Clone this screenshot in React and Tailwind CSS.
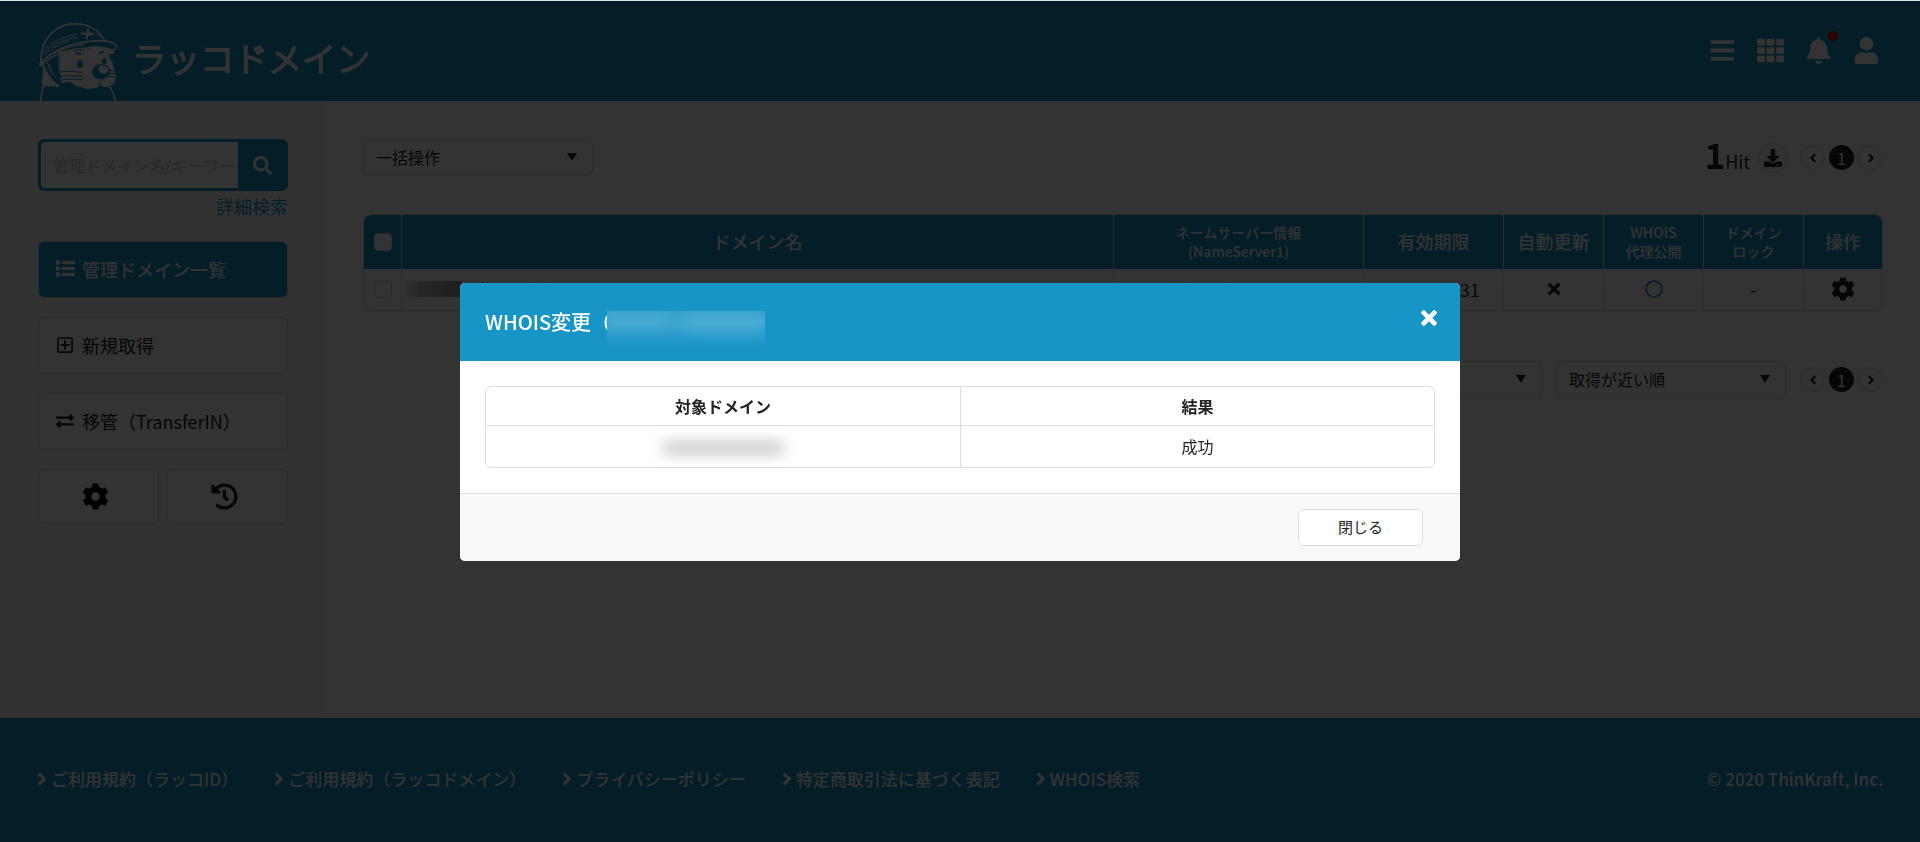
import React from 'react';
import {
  FaBars,
  FaTh,
  FaBell,
  FaUser,
  FaSearch,
  FaList,
  FaRegPlusSquare,
  FaExchangeAlt,
  FaCog,
  FaHistory,
  FaDownload,
  FaAngleLeft,
  FaAngleRight,
  FaTimes,
  FaRegCircle,
} from 'react-icons/fa';

const footerLinks = [
  'ご利用規約（ラッコID）',
  'ご利用規約（ラッコドメイン）',
  'プライバシーポリシー',
  '特定商取引法に基づく表記',
  'WHOIS検索',
];

const columns = [
  { header: 'ドメイン名', width: '' },
  { header: 'ネームサーバー情報\n(NameServer1)', width: 'w-[250px]', small: true },
  { header: '有効期限', width: 'w-[140px]' },
  { header: '自動更新', width: 'w-[100px]' },
  { header: 'WHOIS\n代理公開', width: 'w-[100px]', small: true },
  { header: 'ドメイン\nロック', width: 'w-[100px]', small: true },
  { header: '操作', width: 'w-[79px]' },
];

const Otter = () => (
  <svg viewBox="15 12 234 237" className="w-[78px] h-[79px]" fill="none" strokeLinecap="round" strokeLinejoin="round" aria-hidden="true">
    {/* back of the head and fur */}
    <path d="M27 142 L42 133 L58 168 L84 207 L72 204 L70 209 L62 204 L56 209 L52 203 L44 208 L42 202 L34 206 L30 200 L24 206 Z" fill="#fff" />
    {/* face */}
    <path d="M78 99 C100 94 112 99 128 98 C150 96 168 92 180 88 C196 83 210 90 222 92 L238 96 L241 106 L228 109 L224 114 C234 128 238 142 242 156 C247 172 247 186 240 196 C230 208 208 210 199 202 C190 214 164 214 148 211 C128 208 116 202 108 192 L78 191 Z" fill="#fff" />
    <path d="M110 193 C118 201 128 207 150 211 M198 190 C199 196 196 202 192 205" stroke="#1795c7" strokeWidth="3" />
    {/* whiskers */}
    <path d="M76 162 C98 158 120 160 144 163 M76 174 H146 M78 187 C98 182 122 184 146 185" stroke="#1795c7" strokeWidth="3" />
    <path d="M76 168 H140 M78 180 H140 M84 194 C98 190 112 190 128 190" stroke="#fff" strokeWidth="3" />
    <path d="M228 158 L244 155 M229 167 L246 167 M228 175 L244 179" stroke="#1795c7" strokeWidth="3" />
    {/* eyes, brows, nose */}
    <ellipse cx="138" cy="138" rx="9" ry="11" fill="#1795c7" />
    <ellipse cx="211" cy="130" rx="7" ry="9" fill="#1795c7" />
    <path d="M124 106 L141 108 M195 106 L210 100" stroke="#1795c7" strokeWidth="6" strokeLinecap="butt" />
    <ellipse cx="201" cy="161" rx="27" ry="23" fill="#1795c7" />
    <ellipse cx="208" cy="155" rx="15" ry="12" fill="#fff" transform="rotate(20 208 155)" />
    {/* chin strap */}
    <path d="M67 104 C60 130 66 160 78 176 M35 140 C48 172 66 196 94 206" stroke="#1795c7" strokeWidth="9" />
    <path d="M76 100 C74 130 74 150 80 170" stroke="#fff" strokeWidth="3" />
    {/* helmet */}
    <path d="M21 140 C17 66 62 17 124 17 C168 18 198 40 212 70" stroke="#fff" strokeWidth="5" />
    <path d="M18 138 C46 104 108 70 198 68 C232 68 249 78 248 88 C244 98 230 96 216 91 C196 84 176 86 160 90 C110 92 60 104 20 143 Z" stroke="#fff" strokeWidth="5" />
    <path d="M33 90 C60 70 92 56 128 49 M34 99 C62 78 94 64 130 57 M30 110 C56 90 80 78 104 70 M26 128 C60 98 112 82 150 80" stroke="#fff" strokeWidth="3" />
    <path d="M144 47 L176 48 M163 34 L158 61" stroke="#fff" strokeWidth="7" />
    <path d="M190 52 L198 54" stroke="#fff" strokeWidth="3" />
    {/* shoulders */}
    <path d="M28 204 C25 218 22 230 20 247 M227 206 C236 220 241 232 244 247" stroke="#fff" strokeWidth="5" />
  </svg>
);

const Select = ({ label, option }) => (
  <div className="relative w-[230px]">
    <select aria-label={label} className="appearance-none w-full h-[37px] pl-3 pr-10 pb-0.5 rounded-md border border-[#ddd] bg-white text-base">
      <option>{option}</option>
    </select>
    <svg viewBox="0 0 10 8" className="pointer-events-none absolute right-4 top-[14px] w-[10px] h-2" aria-hidden="true">
      <path d="M0 0H10L5 8Z" fill="#222" />
    </svg>
  </div>
);

const Pager = () => (
  <nav className="flex gap-1" aria-label="ページ">
    <button aria-label="前へ" className="size-[25px] rounded-full border border-[#ddd] flex items-center justify-center">
      <FaAngleLeft size={14} />
    </button>
    <button className="size-[25px] rounded-full bg-[#222] text-white text-base flex items-center justify-center">1</button>
    <button aria-label="次へ" className="size-[25px] rounded-full border border-[#ddd] flex items-center justify-center">
      <FaAngleRight size={14} />
    </button>
  </nav>
);

const Header = () => (
  <header className="h-[100px] shrink-0 pl-[39px] pr-10 bg-[#1795c7] text-white flex items-center justify-between">
    <a href="#" className="flex items-center gap-[15px] self-end h-[100px]">
      <span className="self-end"><Otter /></span>
      <span className="pt-[14px] text-[34px] leading-[44px] font-light [-webkit-text-stroke:2px_white]">ラッコドメイン</span>
    </a>
    <div className="pb-0.5 flex items-center gap-[21px] text-[27px]">
      <button aria-label="メニュー"><FaBars /></button>
      <button aria-label="サービス一覧"><FaTh /></button>
      <button aria-label="お知らせ" className="relative">
        <FaBell />
        <span className="absolute -top-[6px] -right-[6px] size-[10px] rounded-full bg-[#e60000]" />
      </button>
      <button aria-label="アカウント"><FaUser /></button>
    </div>
  </header>
);

const MenuItem = ({ icon, children, active = false }) => (
  <a
    href="#"
    className={`h-[57px] px-[17px] pb-0.5 rounded-md border border-[#ddd] flex items-center gap-2 text-lg ${
      active ? 'bg-[#1795c7] text-white font-medium' : 'bg-white'
    }`}
  >
    <span className="w-[18px] flex justify-center">{icon}</span>
    {children}
  </a>
);

const Sidebar = () => (
  <aside className="w-[325px] shrink-0 bg-[#f9f9f9] pl-[38px] pr-[37px] pt-[38px]">
    <form className="flex h-[52px] rounded-md border-[3px] border-[#1795c7] bg-[#1795c7] overflow-hidden">
      <input
        type="text"
        aria-label="管理ドメイン名/キーワード"
        placeholder="管理ドメイン名/キーワード"
        className="min-w-0 flex-1 pl-3 rounded-l-sm bg-white text-base placeholder:text-[#ccc]"
      />
      <button type="button" aria-label="検索" className="w-[47px] pl-0.5 flex items-center justify-center text-white">
        <FaSearch size={19} />
      </button>
    </form>
    <div className="text-right text-lg leading-[30px]">
      <a href="#" className="text-[#1795c7]">詳細検索</a>
    </div>
    <nav className="mt-5 flex flex-col gap-[19px]">
      <MenuItem icon={<FaList size={19} className="shrink-0" stroke="currentColor" strokeWidth="24" />} active>管理ドメイン一覧</MenuItem>
      <MenuItem icon={<FaRegPlusSquare size={18} />}>新規取得</MenuItem>
      <MenuItem icon={<FaExchangeAlt size={18} />}>移管（TransferIN）</MenuItem>
      <div className="flex gap-2">
        <a href="#" aria-label="設定" className="flex-1 h-[55px] pr-1.5 rounded-md border border-[#ddd] bg-white flex items-center justify-center text-black">
          <FaCog size={27} />
        </a>
        <a href="#" aria-label="履歴" className="flex-1 h-[55px] pr-1.5 rounded-md border border-[#ddd] bg-white flex items-center justify-center">
          <FaHistory size={27} />
        </a>
      </div>
    </nav>
  </aside>
);

const DomainTable = () => (
  <div className="mt-[38px] rounded-lg border border-[#ddd] overflow-hidden">
    <table className="w-full table-fixed border-separate border-spacing-0 text-center text-lg">
      <thead className="bg-[#1795c7] text-white">
        <tr className="h-[54px]">
          <th className="w-[37px] p-0">
            <input type="checkbox" aria-label="すべて選択" className="appearance-none block mx-auto size-[18px] rounded border border-[#ddd] bg-white" />
          </th>
          {columns.map((col) => (
            <th
              key={col.header}
              className={`p-0 border-l border-[#ddd] font-medium whitespace-pre-line ${col.width} ${col.small ? 'text-sm leading-[19px]' : 'pb-0.5'}`}
            >
              {col.header}
            </th>
          ))}
        </tr>
      </thead>
      <tbody>
        <tr className="h-[41px] [&>td]:p-0 [&>td]:pb-0.5 [&>td+td]:border-l [&>td+td]:border-dashed [&>td+td]:border-[#ddd]">
          <td>
            <input type="checkbox" aria-label="選択" className="appearance-none block mx-auto size-[18px] rounded border border-[#ddd] bg-white" />
          </td>
          <td>
            <div className="flex items-center gap-2">
              <span className="w-[60px] h-4 bg-linear-to-r from-white via-[#bbb] via-30% to-[#999]" />
              <span>ell-sand.jp</span>
            </div>
          </td>
          <td>dns1.dnsv.com</td>
          <td>2021-05-31</td>
          <td><FaTimes size={18} className="mx-auto" aria-label="無効" /></td>
          <td><FaRegCircle size={18} className="mx-auto text-[#1795c7]" aria-label="有効" /></td>
          <td>-</td>
          <td>
            <button aria-label="操作" className="block mx-auto"><FaCog size={24} /></button>
          </td>
        </tr>
      </tbody>
    </table>
  </div>
);

const Footer = () => (
  <footer className="h-[124px] shrink-0 px-[37px] pb-0.5 bg-[#1795c7] text-white text-[17px] font-medium flex items-center justify-between">
    <ul className="flex gap-9">
      {footerLinks.map((link) => (
        <li key={link}>
          <a href="#" className="flex items-center gap-1 whitespace-nowrap">
            <FaAngleRight className="w-[10px] h-5" />
            {link}
          </a>
        </li>
      ))}
    </ul>
    <small className="text-[17px]">© 2020 ThinKraft, Inc.</small>
  </footer>
);

const WhoisModal = () => (
  <div className="fixed inset-x-0 top-px bottom-0 bg-black/80 flex items-center justify-center">
    <div role="dialog" aria-labelledby="whois-title" className="w-[1000px] rounded-[5px] overflow-hidden bg-white">
      <div className="h-[78px] pl-6 pr-5 bg-[#1795c7] text-white flex items-start justify-between">
        <h2 id="whois-title" className="pt-[23px] pl-px text-xl leading-8 font-medium flex">
          WHOIS変更（
          <span className="relative -ml-1 mt-[5px] w-[158px] h-[35px] overflow-hidden bg-linear-to-b from-[#36a2ce] via-[#3ba5d0] via-35% to-[#1795c7]">
            <span className="absolute left-0 top-1 w-[60px] h-3 rounded-full bg-white/10 blur-[8px]" />
            <span className="absolute left-[76px] top-1 w-[84px] h-4 rounded-full bg-white/10 blur-[8px]" />
          </span>
        </h2>
        <button aria-label="閉じる" className="mt-[24px]"><FaTimes size={22} stroke="currentColor" strokeWidth="16" /></button>
      </div>
      <div className="p-[25px]">
        <div className="rounded-md border border-[#ddd] overflow-hidden">
          <table className="w-full table-fixed border-separate border-spacing-0 text-center text-base">
            <thead>
              <tr className="h-[39px]">
                <th className="p-0 border-b border-[#ddd] font-bold">対象ドメイン</th>
                <th className="p-0 border-b border-l border-[#ddd] font-bold">結果</th>
              </tr>
            </thead>
            <tbody>
              <tr className="h-[41px]">
                <td className="p-0 pt-1">
                  <div className="mx-auto w-[124px] h-[14px] rounded-full bg-black/20 blur-[7px]" />
                </td>
                <td className="p-0 border-l border-[#ddd]">成功</td>
              </tr>
            </tbody>
          </table>
        </div>
      </div>
      <div className="border-t border-[#ddd] bg-[#f8faf9] py-[15px] pr-[37px] flex justify-end">
        <button className="w-[125px] h-[37px] rounded-md border border-[#ddd] bg-white text-[15px]">閉じる</button>
      </div>
    </div>
  </div>
);

export default function App() {
  return (
    <div className="min-h-screen flex flex-col border-t border-[#dce6ea] bg-white text-[#222] font-['Noto_Sans_CJK_JP',sans-serif]">
      <Header />
      <div className="flex-1 flex">
        <Sidebar />
        <main className="flex-1 min-w-0 pl-[38px] pr-[37px] pt-[38px]">
          <div className="flex items-center justify-between h-[37px]">
            <Select label="一括操作" option="一括操作" />
            <div className="flex items-center">
              <p className="flex items-baseline text-lg leading-8">
                <strong className="text-[35px]">1</strong>Hit
              </p>
              <button aria-label="ダウンロード" className="ml-2 mr-3 size-[30px] rounded-full border border-[#ddd] flex items-center justify-center">
                <FaDownload size={18} />
              </button>
              <Pager />
            </div>
          </div>
          <DomainTable />
          <div className="mt-[50px] flex items-center justify-end gap-[14px]">
            <Select label="表示件数" option="20件" />
            <Select label="並び順" option="取得が近い順" />
            <Pager />
          </div>
        </main>
      </div>
      <Footer />
      <WhoisModal />
    </div>
  );
}
